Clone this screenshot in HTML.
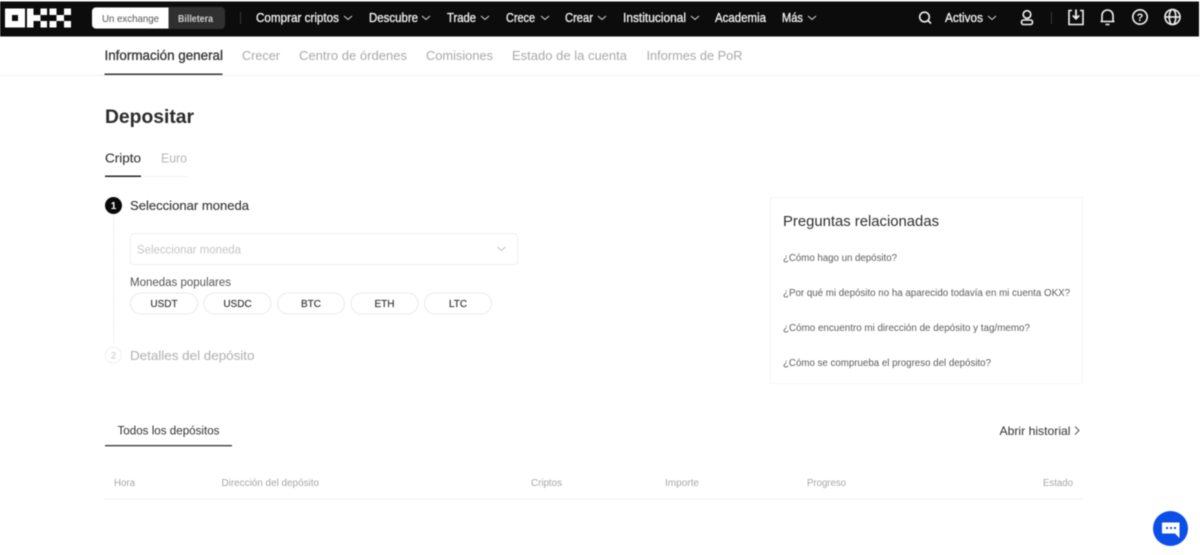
<!DOCTYPE html>
<html lang="es">
<head>
<meta charset="utf-8">
<title>Depositar</title>
<style>
html,body{margin:0;padding:0;background:#fff;width:1200px;height:555px;overflow:hidden}
svg{display:block;filter:blur(.5px)}
text{font-family:"Liberation Sans",sans-serif}
.n{font-size:12.500px;fill:#f2f2f2;stroke:#f2f2f2;stroke-width:.3}
.t{font-size:13px;fill:#a9a9a9}
.q{font-size:10px;fill:#5c5c5c}
.h{font-size:10px;fill:#a6a6a6}
.c{font-size:10px;fill:#333;stroke:#333;stroke-width:.15;text-anchor:middle}
.ch{fill:none;stroke:#d8d8d8;stroke-width:1}
.ic{fill:none;stroke:#f0f0f0;stroke-width:1.6}
</style>
</head>
<body>
<svg width="1200" height="555" viewBox="0 0 1200 555" xmlns="http://www.w3.org/2000/svg">
<rect width="1200" height="555" fill="#fff"/>
<!-- top bar -->
<rect x="0" y="1.5" width="1199" height="35" fill="#0c0c0c"/>
<!-- logo -->
<g fill="#fff">
<path fill-rule="evenodd" d="M5 8.500h20v19H5zM12 15v6h6v-6z"/>
<rect x="27" y="8.500" width="6.500" height="19"/>
<rect x="33.500" y="15" width="7" height="6"/>
<rect x="40.500" y="8.500" width="6.500" height="6.500"/>
<rect x="40.500" y="21" width="6.500" height="6.500"/>
<rect x="49.500" y="8.500" width="7" height="6.500"/>
<rect x="64" y="8.500" width="7" height="6.500"/>
<rect x="56.500" y="15" width="7.500" height="6"/>
<rect x="49.500" y="21" width="7" height="6.500"/>
<rect x="64" y="21" width="7" height="6.500"/>
</g>
<!-- exchange/wallet toggle -->
<rect x="92" y="7" width="133" height="22" rx="4" fill="#303030"/>
<path d="M96 7.500h72.500v21H96a4 4 0 0 1-4-4v-13a4 4 0 0 1 4-4z" fill="#fff"/>
<text x="102" y="22" font-size="10.500" fill="#555" textLength="57" lengthAdjust="spacingAndGlyphs">Un exchange</text>
<text x="178" y="22" font-size="10" font-weight="700" fill="#cfcfcf" textLength="35" lengthAdjust="spacingAndGlyphs">Billetera</text>
<rect x="240" y="12" width="1" height="12" fill="#3a3a3a"/>
<!-- nav -->
<text class="n" x="256" y="22" textLength="83" lengthAdjust="spacingAndGlyphs">Comprar criptos</text>
<path class="ch" d="M344 16l4 3.500 4-3.500"/>
<text class="n" x="369" y="22" textLength="49" lengthAdjust="spacingAndGlyphs">Descubre</text>
<path class="ch" d="M422 16l4 3.500 4-3.500"/>
<text class="n" x="447" y="22" textLength="29" lengthAdjust="spacingAndGlyphs">Trade</text>
<path class="ch" d="M481 16l4 3.500 4-3.500"/>
<text class="n" x="506" y="22" textLength="29" lengthAdjust="spacingAndGlyphs">Crece</text>
<path class="ch" d="M541 16l4 3.500 4-3.500"/>
<text class="n" x="565" y="22" textLength="28" lengthAdjust="spacingAndGlyphs">Crear</text>
<path class="ch" d="M598 16l4 3.500 4-3.500"/>
<text class="n" x="623" y="22" textLength="63" lengthAdjust="spacingAndGlyphs">Institucional</text>
<path class="ch" d="M691 16l4 3.500 4-3.500"/>
<text class="n" x="715" y="22" textLength="51" lengthAdjust="spacingAndGlyphs">Academia</text>
<text class="n" x="782" y="22" textLength="21" lengthAdjust="spacingAndGlyphs">Más</text>
<path class="ch" d="M808 16l4 3.500 4-3.500"/>
<!-- right icons -->
<circle class="ic" cx="924.500" cy="17" r="4.800"/>
<path class="ic" d="M928 20.500l3 3"/>
<text class="n" x="945" y="22" textLength="38" lengthAdjust="spacingAndGlyphs">Activos</text>
<path class="ch" d="M988 16l4 3.500 4-3.500"/>
<circle class="ic" cx="1027" cy="14.500" r="3.800"/>
<rect class="ic" x="1021.500" y="20" width="11" height="4.500" rx="2"/>
<rect x="1051" y="12" width="1" height="12" fill="#3a3a3a"/>
<path class="ic" d="M1072 10.500h-3v14h14v-14h-3"/>
<path fill="none" stroke="#f0f0f0" stroke-width="1.800" d="M1076 9.500v9M1072.800 15.500l3.200 3.200 3.200-3.200"/>
<path class="ic" d="M1102 21.500v-6a5.500 5.500 0 0 1 11 0v6zM1100.500 21.500h14M1105.500 24.500h4"/>
<circle class="ic" cx="1140" cy="17" r="7.200"/>
<text x="1140" y="21" font-size="11" font-weight="700" fill="#f0f0f0" text-anchor="middle">?</text>
<circle class="ic" cx="1172.500" cy="17" r="7.500"/>
<ellipse class="ic" cx="1172.500" cy="17" rx="3.300" ry="7.500"/>
<path class="ic" d="M1165 17h15"/>
<!-- sub nav -->
<text x="104.500" y="60" font-size="13.500" fill="#333" stroke="#333" stroke-width=".3" textLength="118.500" lengthAdjust="spacingAndGlyphs">Información general</text>
<rect x="104.500" y="73.500" width="118" height="1.500" fill="#333"/>
<text class="t" x="242" y="60" textLength="38" lengthAdjust="spacingAndGlyphs">Crecer</text>
<text class="t" x="299" y="60" textLength="108" lengthAdjust="spacingAndGlyphs">Centro de órdenes</text>
<text class="t" x="426" y="60" textLength="67" lengthAdjust="spacingAndGlyphs">Comisiones</text>
<text class="t" x="512" y="60" textLength="115" lengthAdjust="spacingAndGlyphs">Estado de la cuenta</text>
<text class="t" x="646.500" y="60" textLength="96" lengthAdjust="spacingAndGlyphs">Informes de PoR</text>
<rect x="0" y="75" width="1200" height="1" fill="#f3f3f3"/>
<!-- title -->
<text x="105" y="123" font-size="19.500" font-weight="700" fill="#2b2b2b" textLength="89" lengthAdjust="spacingAndGlyphs">Depositar</text>
<text x="105" y="162.500" font-size="13" fill="#333" stroke="#333" stroke-width=".12" textLength="36" lengthAdjust="spacingAndGlyphs">Cripto</text>
<text x="161" y="162.500" font-size="13" fill="#b5b5b5" textLength="26" lengthAdjust="spacingAndGlyphs">Euro</text>
<rect x="141" y="176" width="47" height="1" fill="#f3f3f3"/>
<rect x="105" y="175.500" width="36" height="1.500" fill="#222"/>
<!-- step 1 -->
<circle cx="113.500" cy="205.500" r="8.500" fill="#0a0a0a"/>
<text x="113.500" y="209" font-size="10" font-weight="700" fill="#fff" text-anchor="middle">1</text>
<text x="130" y="210" font-size="13" fill="#333" stroke="#333" stroke-width=".12" textLength="119" lengthAdjust="spacingAndGlyphs">Seleccionar moneda</text>
<path d="M113.500 215v129" stroke="#ededed" stroke-width="1" stroke-dasharray="2 1" fill="none"/>
<rect x="130.500" y="233.500" width="387" height="31" rx="3" fill="#fff" stroke="#f0f0f0"/>
<text x="137" y="253.500" font-size="11.500" fill="#c6c6c6" textLength="104" lengthAdjust="spacingAndGlyphs">Seleccionar moneda</text>
<path d="M497.500 247l4 3.500 4-3.500" fill="none" stroke="#c0c0c0" stroke-width="1"/>
<text x="130" y="286" font-size="11.500" fill="#555" textLength="101" lengthAdjust="spacingAndGlyphs">Monedas populares</text>
<g fill="#fff" stroke="#e9e9e9">
<rect x="130.500" y="293" width="67" height="21" rx="10.500"/>
<rect x="204" y="293" width="67" height="21" rx="10.500"/>
<rect x="277.500" y="293" width="67" height="21" rx="10.500"/>
<rect x="351" y="293" width="67" height="21" rx="10.500"/>
<rect x="424.500" y="293" width="67" height="21" rx="10.500"/>
</g>
<text class="c" x="164" y="307">USDT</text>
<text class="c" x="237.500" y="307">USDC</text>
<text class="c" x="311" y="307">BTC</text>
<text class="c" x="384.500" y="307">ETH</text>
<text class="c" x="458" y="307">LTC</text>
<!-- step 2 -->
<circle cx="113.500" cy="355" r="8" fill="#fff" stroke="#f0f0f0"/>
<text x="113.500" y="358.500" font-size="9.500" fill="#c4c4c4" text-anchor="middle">2</text>
<text x="130" y="360" font-size="13" fill="#b5b5b5" stroke="#b5b5b5" stroke-width=".12" textLength="124.500" lengthAdjust="spacingAndGlyphs">Detalles del depósito</text>
<!-- FAQ card -->
<rect x="770.500" y="197.500" width="312" height="186" fill="#fff" stroke="#f7f7f7"/>
<text x="783" y="226" font-size="15" fill="#2e2e2e" textLength="156" lengthAdjust="spacingAndGlyphs">Preguntas relacionadas</text>
<text class="q" x="783" y="261" textLength="114" lengthAdjust="spacingAndGlyphs">¿Cómo hago un depósito?</text>
<text class="q" x="783" y="296" textLength="287" lengthAdjust="spacingAndGlyphs">¿Por qué mi depósito no ha aparecido todavía en mi cuenta OKX?</text>
<text class="q" x="783" y="331" textLength="247" lengthAdjust="spacingAndGlyphs">¿Cómo encuentro mi dirección de depósito y tag/memo?</text>
<text class="q" x="783" y="366" textLength="208" lengthAdjust="spacingAndGlyphs">¿Cómo se comprueba el progreso del depósito?</text>
<!-- deposits table -->
<text x="117.500" y="434.500" font-size="11.500" fill="#333" textLength="102" lengthAdjust="spacingAndGlyphs">Todos los depósitos</text>
<rect x="105" y="445" width="127" height="1.300" fill="#333"/>
<text x="999.500" y="435" font-size="12" fill="#333" textLength="71" lengthAdjust="spacingAndGlyphs">Abrir historial</text>
<path d="M1075 426.500l4 4-4 4" fill="none" stroke="#555" stroke-width="1"/>
<text class="h" x="114" y="486" textLength="21" lengthAdjust="spacingAndGlyphs">Hora</text>
<text class="h" x="221.500" y="486" textLength="97.500" lengthAdjust="spacingAndGlyphs">Dirección del depósito</text>
<text class="h" x="531" y="486" textLength="31" lengthAdjust="spacingAndGlyphs">Criptos</text>
<text class="h" x="665" y="486" textLength="34" lengthAdjust="spacingAndGlyphs">Importe</text>
<text class="h" x="807" y="486" textLength="39" lengthAdjust="spacingAndGlyphs">Progreso</text>
<text class="h" x="1043" y="486" textLength="30" lengthAdjust="spacingAndGlyphs">Estado</text>
<rect x="105" y="498.500" width="978" height="1" fill="#f4f4f4"/>
<!-- chat button -->
<circle cx="1170.500" cy="528.500" r="17.500" fill="#0b4fe8"/>
<path d="M1162 522.500h17.500v15.500l-4.500-4.500h-13z" fill="#fff"/>
<g fill="#0b4fe8">
<rect x="1166" y="527" width="2" height="2"/>
<rect x="1170" y="527" width="2" height="2"/>
<rect x="1174" y="527" width="2" height="2"/>
</g>
</svg>
</body>
</html>
